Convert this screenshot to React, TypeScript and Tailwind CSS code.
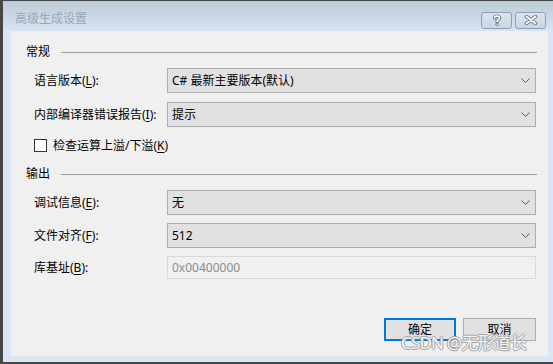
import { ReactNode } from 'react';

function Accel({ k }: { k: string }) {
  return <span className="underline underline-offset-2 decoration-1">{k}</span>;
}

function Chevron() {
  return (
    <svg width="9" height="5" viewBox="0 0 9 5" className="shrink-0">
      <path d="M0.5 0.5 L4.5 4.5 L8.5 0.5" fill="none" stroke="#5a5a5a" strokeWidth="1" />
    </svg>
  );
}

function GroupHeader({ title, className = '' }: { title: string; className?: string }) {
  return (
    <div className={`flex items-center h-[14px] pl-[15px] pr-[11px] ${className}`}>
      <span className="text-[12px] leading-none text-black">{title}</span>
      <div className="ml-[11px] flex-1 h-px bg-[#a0a0a0]" />
    </div>
  );
}

function Row({ label, children, className = '' }: { label: ReactNode; children: ReactNode; className?: string }) {
  return (
    <div className={`flex items-center pl-[23px] pr-[12px] ${className}`}>
      <div className="w-[133px] text-[12px] leading-none text-black">{label}</div>
      {children}
    </div>
  );
}

function Combo({ value }: { value: string }) {
  return (
    <div className="w-[369px] h-[25px] flex items-center justify-between pl-[4px] pr-[5px] bg-[#e1e1e1] border border-[#adadad] text-[12px] leading-none text-black">
      <span>{value}</span>
      <Chevron />
    </div>
  );
}

function TitleButton({ children }: { children: ReactNode }) {
  return (
    <div className="w-[31px] h-[17px] flex items-center justify-center rounded-[3px] border border-[#8f9eb0] bg-gradient-to-b from-[#dbe4ee] to-[#c9d6e4]">
      {children}
    </div>
  );
}

export default function App() {
  return (
    <div className="w-[553px] h-[364px] overflow-hidden bg-[#f0f0f0] font-['Noto_Sans','Noto_Sans_CJK_SC',sans-serif]">
      <div className="w-full h-full border-l-[3px] border-t border-b-2 border-[#474747] flex flex-col bg-[#dae6f3]">
        {/* title bar */}
        <div className="h-[30px] flex items-center pl-[12px] pr-[7px] bg-gradient-to-b from-[#bccbd9] to-[#d8e4f1]">
          <span className="text-[12px] leading-none text-[#9aa6b3] mt-[6px]">高级生成设置</span>
          <div className="ml-auto flex gap-[3px] mt-[8px]">
            <TitleButton>
              <svg width="10" height="12" viewBox="0 0 10 12">
                <path d="M2.5 4 C2.5 1.5 7.5 1.5 7.5 4 C7.5 5.5 5 5.8 5 7.5" fill="none" stroke="#6b7480" strokeWidth="3.4" strokeLinecap="round" />
                <path d="M2.5 4 C2.5 1.5 7.5 1.5 7.5 4 C7.5 5.5 5 5.8 5 7.5" fill="none" stroke="#ffffff" strokeWidth="1.6" strokeLinecap="round" />
                <circle cx="5" cy="10.2" r="1.6" fill="#6b7480" />
                <circle cx="5" cy="10.2" r="0.8" fill="#ffffff" />
              </svg>
            </TitleButton>
            <TitleButton>
              <svg width="14" height="10" viewBox="0 0 14 10">
                <path d="M2.5 1.5 L11.5 8.5 M11.5 1.5 L2.5 8.5" fill="none" stroke="#6b7480" strokeWidth="3.6" strokeLinecap="round" />
                <path d="M2.5 1.5 L11.5 8.5 M11.5 1.5 L2.5 8.5" fill="none" stroke="#ffffff" strokeWidth="1.8" strokeLinecap="round" />
              </svg>
            </TitleButton>
          </div>
        </div>

        {/* client area */}
        <div className="flex-1 flex pl-[8px] pr-[5px] pb-[6px]">
          <div className="relative flex-1 flex flex-col bg-[#f0f0f0] pt-[14px]">
            <GroupHeader title="常规" />
            <Row className="mt-[9px]" label={<>语言版本(<Accel k="L" />):</>}>
              <Combo value="C# 最新主要版本(默认)" />
            </Row>
            <Row className="mt-[9px]" label={<>内部编译器错误报告(<Accel k="I" />):</>}>
              <Combo value="提示" />
            </Row>
            <div className="mt-[12px] pl-[23px] flex items-center h-[13px]">
              <div className="w-[13px] h-[13px] bg-white border border-[#333333]" />
              <span className="ml-[6px] text-[12px] leading-none text-black">
                检查运算上溢/下溢(<Accel k="K" />)
              </span>
            </div>
            <GroupHeader title="输出" className="mt-[15px]" />
            <Row className="mt-[9px]" label={<>调试信息(<Accel k="E" />):</>}>
              <Combo value="无" />
            </Row>
            <Row className="mt-[8px]" label={<>文件对齐(<Accel k="F" />):</>}>
              <Combo value="512" />
            </Row>
            <Row className="mt-[8px]" label={<>库基址(<Accel k="B" />):</>}>
              <div className="w-[369px] h-[23px] flex items-center pl-[4px] bg-[#f0f0f0] border border-[#d9d9d9] text-[12px] leading-none text-[#8c8c8c]">
                0x00400000
              </div>
            </Row>

            <div className="mt-auto mb-[15px] flex justify-end gap-[7px] pr-[12px]">
              <div className="w-[72px] h-[23px] flex items-center justify-center bg-[#e1e1e1] border-2 border-[#0078d7] text-[12px] leading-none text-black">
                确定
              </div>
              <div className="w-[73px] h-[23px] flex items-center justify-center bg-[#e1e1e1] border border-[#adadad] text-[12px] leading-none text-black">
                取消
              </div>
            </div>

            {/* watermark */}
            <div className="absolute left-[390px] top-[303px] text-[17px] leading-none tracking-[-0.8px] text-[#f6f6f6] [text-shadow:1px_0_0_#a3a3a3,-1px_0_0_#a3a3a3,0_1px_0_#a3a3a3,0_-1px_0_#a3a3a3] whitespace-nowrap">
              CSDN @无形道长
            </div>
          </div>
        </div>
      </div>
    </div>
  );
}
